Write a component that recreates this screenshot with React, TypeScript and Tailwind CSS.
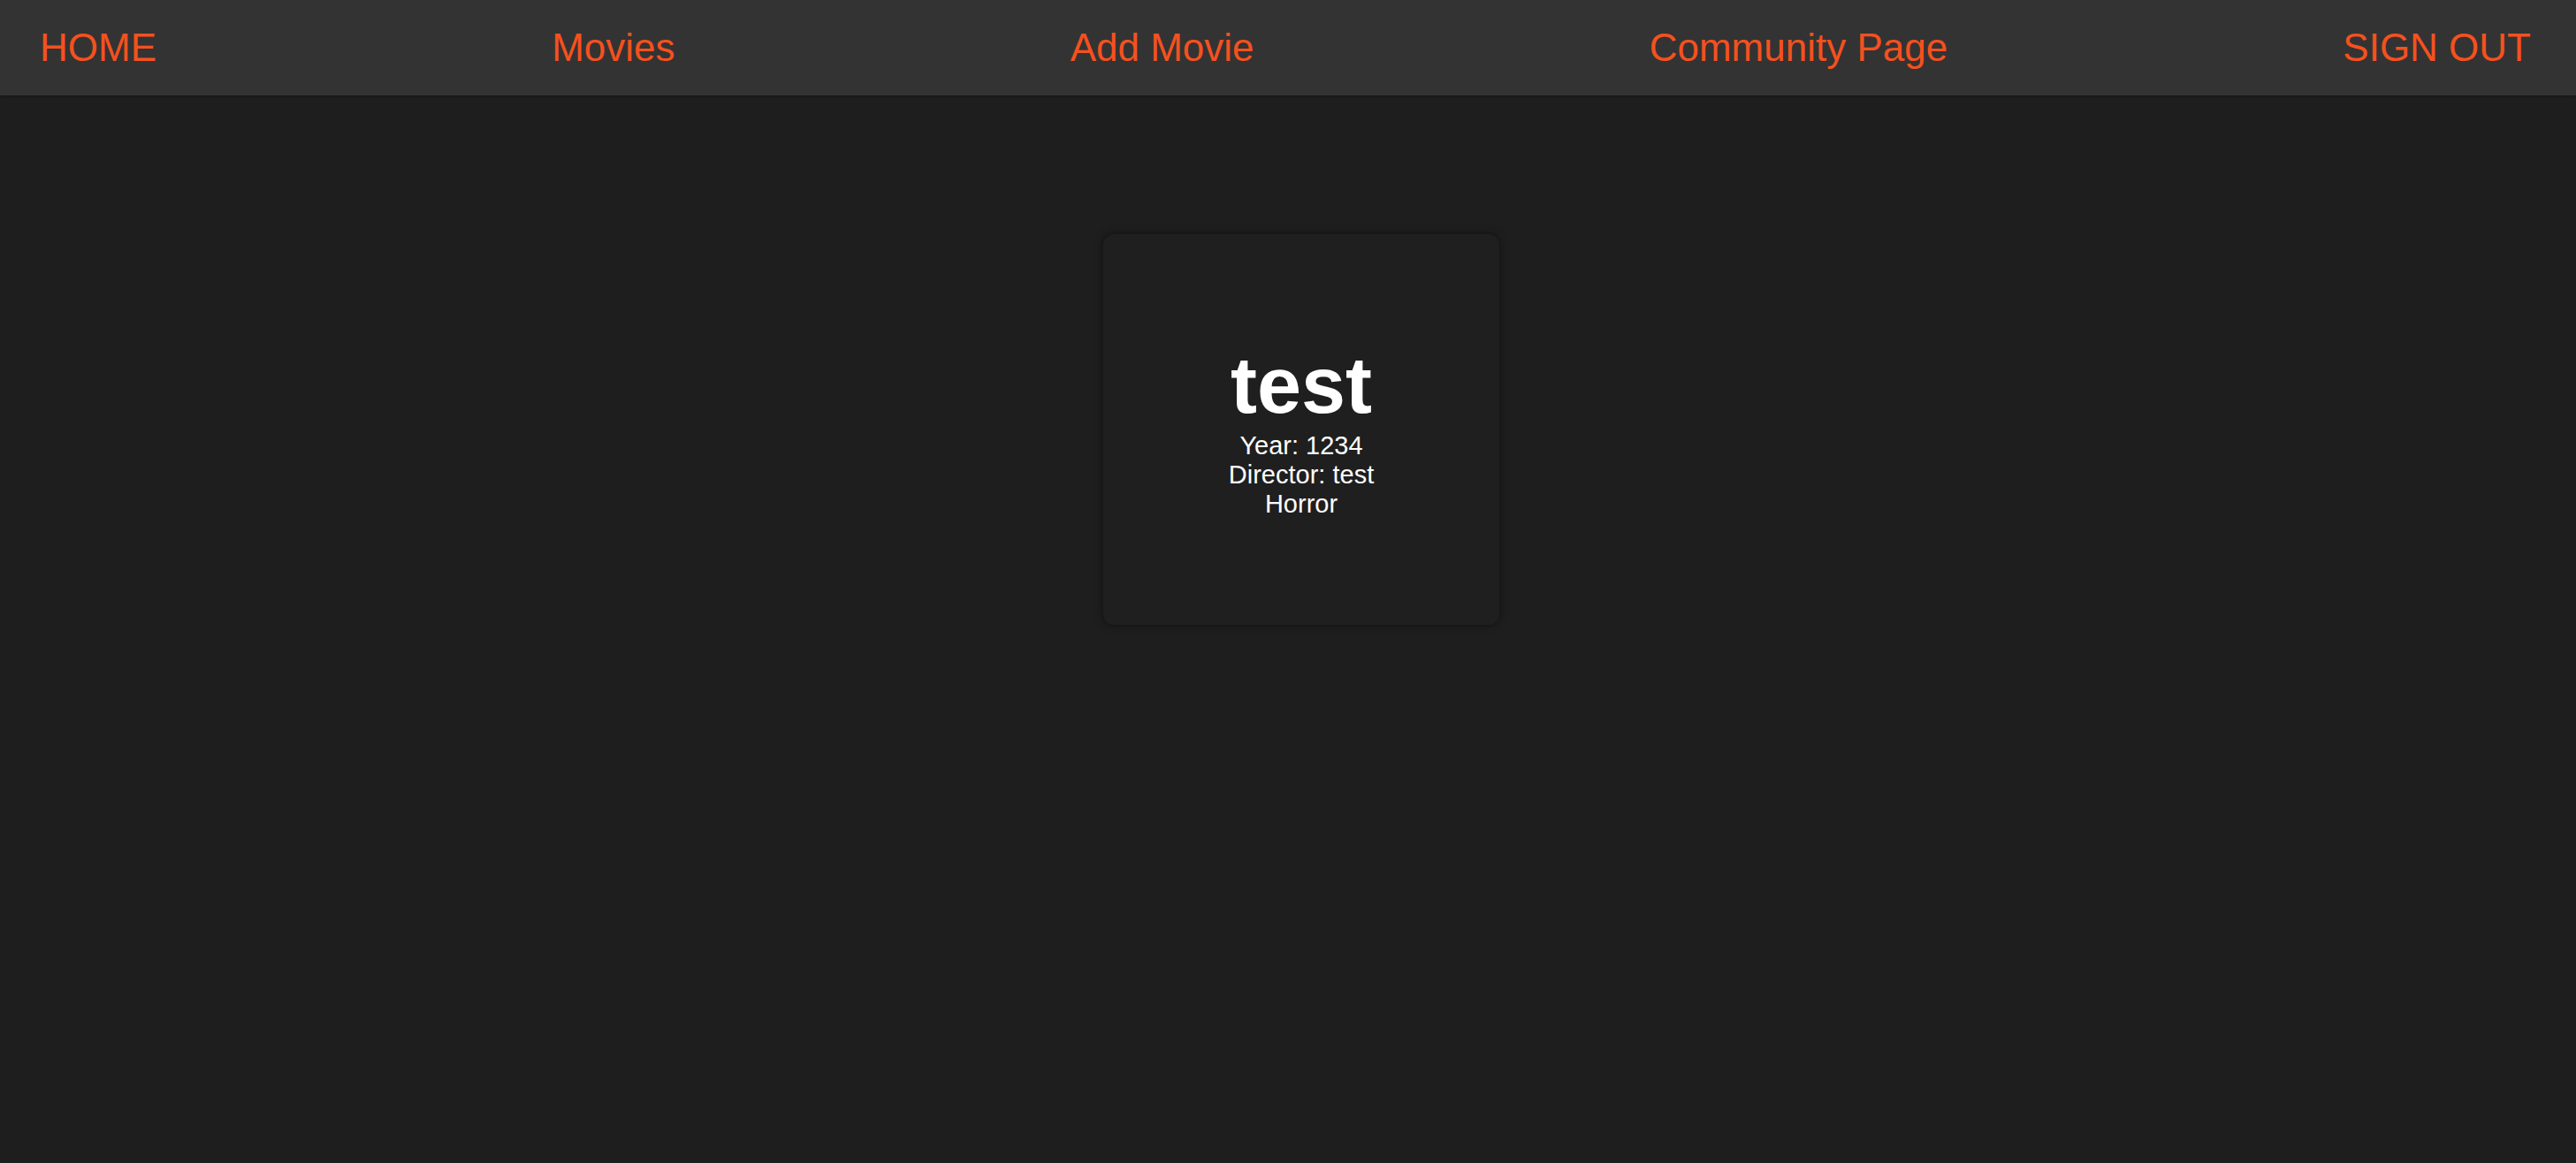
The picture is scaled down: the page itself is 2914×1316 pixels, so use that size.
const links = ["HOME", "Movies", "Add Movie", "Community Page", "SIGN OUT"]

const MovieCard = () => {
  return (
    <div className="w-[448px] h-[442px] rounded-[12px] bg-[#1f1f1f] shadow-[0_0_10px_rgba(0,0,0,0.5)] flex flex-col items-center justify-center text-white text-center">
      <h2 className="text-[90px] font-bold leading-[normal]">test</h2>
      <p className="text-[29px] leading-[normal]">Year: 1234</p>
      <p className="text-[29px] leading-[normal]">Director: test</p>
      <p className="text-[29px] leading-[normal]">Horror</p>
    </div>
  )
}

export default function App() {
  return (
    <div className="h-screen overflow-hidden bg-[#1e1e1e] font-['Liberation_Sans',Arial,sans-serif]">
      <nav className="h-[108px] bg-[#333333] flex items-center justify-between pl-[45px] pr-[51px] shadow-[0_1px_3px_rgba(0,0,0,0.3)]">
        {links.map((l) => (
          <a key={l} href="#" className="text-[44px] text-[#f4511e] leading-none">
            {l}
          </a>
        ))}
      </nav>

      <main className="flex justify-center pt-[157px] pl-[30px]">
        <MovieCard />
      </main>
    </div>
  )
}
